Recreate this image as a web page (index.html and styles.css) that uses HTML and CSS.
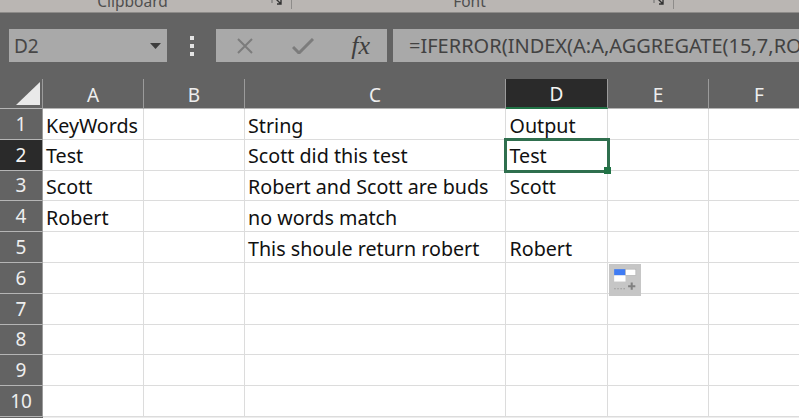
FILE: index.html
```html
<!DOCTYPE html>
<html lang="en">
<head>
<meta charset="utf-8">
<title>Excel sheet</title>
<link rel="stylesheet" href="styles.css">
</head>
<body>
<div class="app">
  <div class="ribbon">
    <div class="group g1"><span class="glabel">Clipboard</span><svg class="launch" width="12" height="10" viewBox="0 0 12 10"><path d="M1 1h5M1 1v5" fill="none" stroke="#6a6a6a"/><path d="M5 2l5 5M10 3v4H6" fill="none" stroke="#333" stroke-width="1.4"/></svg></div>
    <div class="group g2"><span class="glabel">Font</span><svg class="launch" width="12" height="10" viewBox="0 0 12 10"><path d="M1 1h5M1 1v5" fill="none" stroke="#6a6a6a"/><path d="M5 2l5 5M10 3v4H6" fill="none" stroke="#333" stroke-width="1.4"/></svg></div>
    <div class="group g3"></div>
  </div>
  <div class="fbar">
    <div class="namebox"><span>D2</span><svg width="11" height="6" viewBox="0 0 11 6"><path d="M0 0h11L5.5 6z" fill="#3d3d3d"/></svg></div>
    <div class="grip"><i></i><i></i><i></i></div>
    <div class="fbuttons">
      <svg class="fx-x" width="18" height="16" viewBox="0 0 18 16"><path d="M2 1l14 14M16 1L2 15" stroke="#7c7c7c" stroke-width="2" fill="none"/></svg>
      <svg class="fx-c" width="22" height="16" viewBox="0 0 22 16"><path d="M1 9l6 6L21 1" stroke="#7c7c7c" stroke-width="3" fill="none"/></svg>
      <span class="fx"><i>fx</i></span>
    </div>
    <div class="formula">=IFERROR(INDEX(A:A,AGGREGATE(15,7,RO</div>
  </div>
  <div class="sheet">
    <div class="h corner"><svg width="24" height="23" viewBox="0 0 24 23"><path d="M24 0v23H0z" fill="#e9e9e9"/></svg></div>
    <div class="h col">A</div><div class="h col">B</div><div class="h col">C</div><div class="h col on">D</div><div class="h col">E</div><div class="h col">F</div>

    <div class="h row">1</div><div class="c">KeyWords</div><div class="c"></div><div class="c">String</div><div class="c d">Output</div><div class="c"></div><div class="c"></div>
    <div class="h row on">2</div><div class="c">Test</div><div class="c"></div><div class="c">Scott did this test</div><div class="c d sel">Test<span class="handle"></span></div><div class="c"></div><div class="c"></div>
    <div class="h row">3</div><div class="c">Scott</div><div class="c"></div><div class="c">Robert and Scott are buds</div><div class="c d">Scott</div><div class="c"></div><div class="c"></div>
    <div class="h row">4</div><div class="c">Robert</div><div class="c"></div><div class="c">no words match</div><div class="c d"></div><div class="c"></div><div class="c"></div>
    <div class="h row">5</div><div class="c"></div><div class="c"></div><div class="c">This shoule return robert</div><div class="c d">Robert</div><div class="c"></div><div class="c"></div>
    <div class="h row">6</div><div class="c"></div><div class="c"></div><div class="c"></div><div class="c"></div><div class="c paste-host"><svg class="paste" width="32" height="32" viewBox="0 0 31 31"><rect width="31" height="31" fill="#c6c6c6"/><rect x="5" y="5" width="11" height="6" fill="#3f7cf4"/><rect x="16" y="5" width="10" height="6" fill="#fff" stroke="#a8a8a8" stroke-width=".5"/><rect x="5" y="11" width="11" height="6" fill="#fff"/><path d="M5 24h11" stroke="#9a9a9a" stroke-dasharray="1.5 1.5"/><path d="M22 18v7M18.500 21.500h7" stroke="#808080" stroke-width="2"/></svg></div><div class="c"></div>
    <div class="h row">7</div><div class="c"></div><div class="c"></div><div class="c"></div><div class="c"></div><div class="c"></div><div class="c"></div>
    <div class="h row">8</div><div class="c"></div><div class="c"></div><div class="c"></div><div class="c"></div><div class="c"></div><div class="c"></div>
    <div class="h row">9</div><div class="c"></div><div class="c"></div><div class="c"></div><div class="c"></div><div class="c"></div><div class="c"></div>
    <div class="h row">10</div><div class="c"></div><div class="c"></div><div class="c"></div><div class="c"></div><div class="c"></div><div class="c"></div>
    <div class="h"></div><div class="end"></div>
  </div>
</div>
</body>
</html>
```
FILE: styles.css
```css
* { box-sizing: border-box; }
html, body { margin: 0; padding: 0; }
body { width: 799px; height: 418px; overflow: hidden; background: #636363; font-family: "Noto Sans", "Open Sans", sans-serif; }
.app { width: 799px; height: 418px; overflow: hidden; display: flex; flex-direction: column; }

.ribbon { height: 13px; flex: none; background: #bab6b3; border-bottom: 1px solid #8d8b89; display: flex; overflow: hidden; }
.group { height: 9px; border-right: 1px solid #8e8c8a; display: flex; justify-content: center; padding-right: 26px; position: relative; flex: none; }
.g1 { width: 292px; }
.g2 { width: 382px; }
.g3 { flex: 1; border: 0; }
.glabel { font-size: 15.5px; line-height: 14px; margin-top: -6px; color: #4f4f4f; }
.launch { position: absolute; right: 8px; top: -3px; }

.fbar { height: 66px; flex: none; padding: 16px 0 17px 9px; display: flex; background: #636363; }
.namebox { width: 158px; height: 33px; background: #a9a9a9; display: flex; align-items: center; justify-content: space-between; padding: 0 6px 0 5px; font-size: 19px; color: #474747; }
.grip { width: 49px; display: flex; flex-direction: column; align-items: center; justify-content: center; gap: 4px; }
.grip i { display: block; width: 4px; height: 4px; background: #e4e4e4; }
.fbuttons { width: 171px; height: 33px; background: #a9a9a9; display: flex; align-items: center; padding: 0 17px 0 20px; justify-content: space-between; margin-right: 6px; flex: none; }
.fx { font: italic 26px "Liberation Serif", serif; color: #3f3f3f; }
.formula { flex: 1; min-width: 0; height: 33px; background: #a9a9a9; padding-left: 16px; font-size: 20px; line-height: 33px; color: #424242; white-space: nowrap; overflow: hidden; }

.sheet { flex: none; width: 810px; height: 339px; display: grid; background: #fff;
  grid-template-columns: 43px 101px 101px 261px 102px 101px 101px;
  grid-template-rows: 30px repeat(10, 30.8px) 1fr; }
.h { background: #636363; color: #eee; display: flex; align-items: center; justify-content: center; font-size: 19px; }
.col { border-right: 1px solid #9b9b9b; border-bottom: 1px solid #b5b5b5; padding-top: 2px; }
.col.on { background: #2a2a2a; color: #f4f4f4; border-bottom: 2px solid #217346; }
.corner { align-items: flex-end; justify-content: flex-start; padding: 0 0 3px 16px; border-right: 1px solid #9b9b9b; border-bottom: 1px solid #b5b5b5; }
.row { border-bottom: 1px solid #b5b5b5; border-right: 1px solid #9b9b9b; }
.row.on { background: #2a2a2a; color: #f4f4f4; }
.c { border-right: 1px solid #dcdcdc; border-bottom: 1px solid #dcdcdc; padding: 2.5px 0 0 3px; font-size: 19.7px; line-height: 28px; color: #111; white-space: nowrap; position: relative; }
.d { padding-left: 3.500px; }
.sel { outline: 3px solid #2f6f4e; outline-offset: -1px; z-index: 1; }
.handle { position: absolute; right: -4px; bottom: -4px; background: #217346; width: 7px; height: 7px; }
.paste { position: absolute; left: 1px; top: 1px; z-index: 2; }
.end { grid-column: 2 / -1; background: #ededed; }
```
